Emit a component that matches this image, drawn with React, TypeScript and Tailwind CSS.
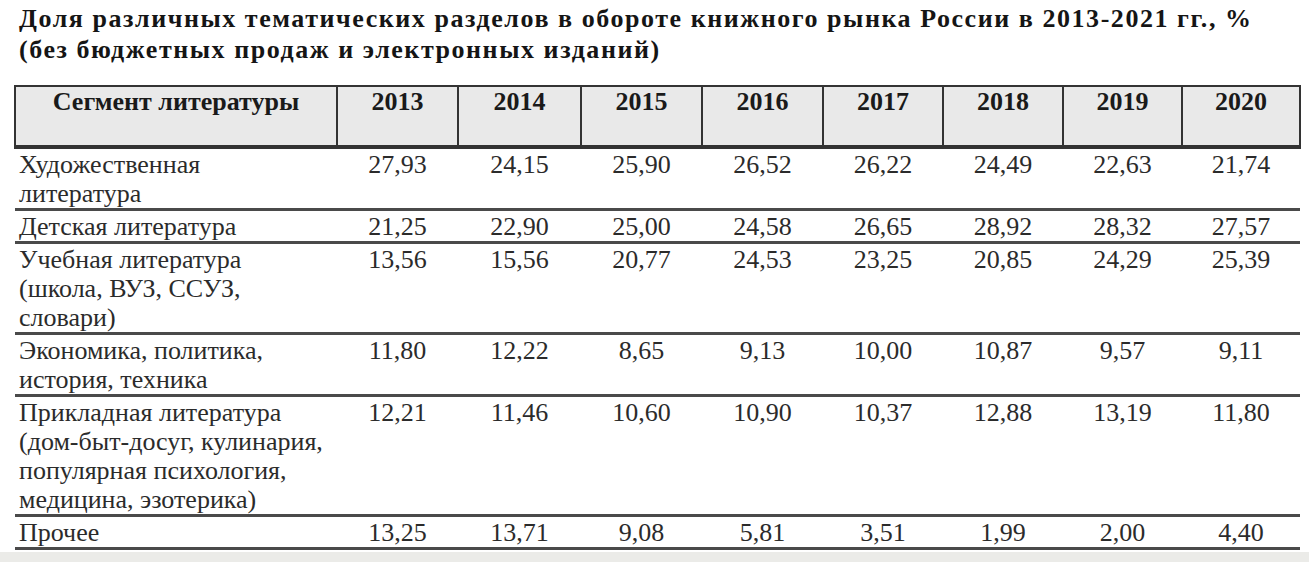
const years = ["2013", "2014", "2015", "2016", "2017", "2018", "2019", "2020"];

const colWidths = [121, 123, 121, 121, 120, 120, 119, 118];

const rows: { label: string[]; values: string[] }[] = [
  {
    label: ["Художественная", "литература"],
    values: ["27,93", "24,15", "25,90", "26,52", "26,22", "24,49", "22,63", "21,74"],
  },
  {
    label: ["Детская литература"],
    values: ["21,25", "22,90", "25,00", "24,58", "26,65", "28,92", "28,32", "27,57"],
  },
  {
    label: ["Учебная литература", "(школа, ВУЗ, ССУЗ,", "словари)"],
    values: ["13,56", "15,56", "20,77", "24,53", "23,25", "20,85", "24,29", "25,39"],
  },
  {
    label: ["Экономика, политика,", "история, техника"],
    values: ["11,80", "12,22", "8,65", "9,13", "10,00", "10,87", "9,57", "9,11"],
  },
  {
    label: [
      "Прикладная литература",
      "(дом-быт-досуг, кулинария,",
      "популярная психология,",
      "медицина, эзотерика)",
    ],
    values: ["12,21", "11,46", "10,60", "10,90", "10,37", "12,88", "13,19", "11,80"],
  },
  {
    label: ["Прочее"],
    values: ["13,25", "13,71", "9,08", "5,81", "3,51", "1,99", "2,00", "4,40"],
  },
];

export default function App() {
  return (
    <div className="h-[562px] w-[1309px] bg-white flex flex-col overflow-hidden font-['Liberation_Serif']">
      <div className="flex-1 pl-[14px] pr-[10px]">
        <h1 className="pt-[3px] pl-[5px] text-[26px] leading-[31px] tracking-[1.55px] font-bold text-[#151515] whitespace-nowrap">
          Доля различных тематических разделов в обороте книжного рынка России в 2013-2021 гг., %
          <br />
          (без бюджетных продаж и электронных изданий)
        </h1>

        <table className="mt-[20px] w-[1285px] border-collapse table-fixed">
          <colgroup>
            <col className="w-[322px]" />
            {colWidths.map((w, i) => (
              <col key={i} style={{ width: w }} />
            ))}
          </colgroup>
          <thead>
            <tr className="bg-[#e9e9e9]">
              <th className="h-[61px] align-top pt-[1px] border-2 border-b-4 border-[#333] text-[26px] leading-[28px] font-bold text-[#1a1a1a] text-center">
                Сегмент литературы
              </th>
              {years.map((y) => (
                <th
                  key={y}
                  className="h-[61px] align-top pt-[1px] border-2 border-b-4 border-[#333] text-[26px] leading-[28px] font-bold text-[#1a1a1a] text-center"
                >
                  {y}
                </th>
              ))}
            </tr>
          </thead>
          <tbody>
            {rows.map((row, ri) => (
              <tr key={ri} className="border-b-[3px] border-[#4a4a4a]">
                <td className="align-top pt-[1px] pl-[4px] text-[26px] leading-[29px] text-[#2b2b2b] whitespace-nowrap">
                  {row.label.map((l, li) => (
                    <div key={li}>{l}</div>
                  ))}
                </td>
                {row.values.map((v, vi) => (
                  <td
                    key={vi}
                    className="align-top pt-[1px] text-center text-[26px] leading-[29px] text-[#2b2b2b]"
                  >
                    {v}
                  </td>
                ))}
              </tr>
            ))}
          </tbody>
        </table>
      </div>
      <div className="h-[10px] bg-[#ebebe8]" />
    </div>
  );
}
